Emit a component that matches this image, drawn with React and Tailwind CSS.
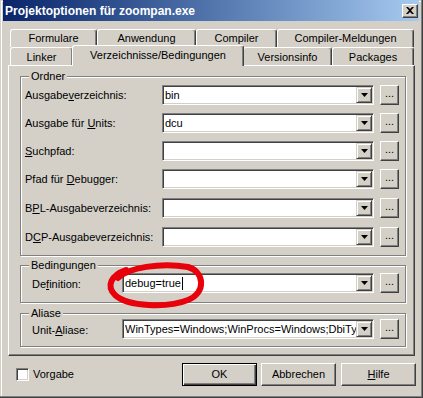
import React from 'react';

const raised =
  'border border-t-white border-l-white border-r-[#404040] border-b-[#404040] bg-[#d4d0c8] shadow-[inset_-1px_-1px_0_#808080]';

const Arrow = () => (
  <div className="flex h-[16px] w-[16px] shrink-0 items-center justify-center border border-t-[#d4d0c8] border-l-[#d4d0c8] border-r-[#404040] border-b-[#404040] bg-[#d4d0c8] shadow-[inset_1px_1px_0_#fff,inset_-1px_-1px_0_#808080]">
    <svg width="7" height="4" viewBox="0 0 7 4">
      <path d="M0 0h7L3.5 4z" fill="black" />
    </svg>
  </div>
);

const Combo = ({ value, wide, caret }) => (
  <div
    className={`flex h-[20px] shrink-0 border border-t-[#808080] border-l-[#808080] border-r-white border-b-white bg-white p-px shadow-[inset_1px_1px_0_#404040,inset_-1px_-1px_0_#d4d0c8] ${
      wide ? 'w-[252px]' : 'w-[212px]'
    }`}
  >
    <div className="flex min-w-0 flex-1 items-center whitespace-nowrap pl-[1px] leading-[16px]">
      {value}
      {caret && <span className="ml-px inline-block h-[13px] w-px bg-black" />}
    </div>
    <Arrow />
  </div>
);

const Dots = () => (
  <div className={`ml-[6px] flex h-[20px] w-[19px] shrink-0 items-center justify-center pb-[4px] ${raised}`}>
    ...
  </div>
);

const Row = ({ label, value, className = '' }) => (
  <div className={`flex h-[20px] items-center ${className}`}>
    <div className="w-[137px] shrink-0">{label}</div>
    <Combo value={value} />
    <Dots />
  </div>
);

const Tab = ({ w, children }) => (
  <div
    className={`flex h-[18px] shrink-0 items-center justify-center rounded-t-[3px] border-t border-l border-r border-t-white border-l-white border-r-[#404040] shadow-[inset_-1px_0_0_#808080] ${w}`}
  >
    {children}
  </div>
);

const Group = ({ title, className = '', children }) => (
  <fieldset
    className={`w-[386px] border border-[#808080] shadow-[1px_1px_0_#fff,inset_1px_1px_0_#fff] ${className}`}
  >
    <legend className="ml-[8px] bg-[#d4d0c8] px-[2px] leading-[12px]">{title}</legend>
    {children}
  </fieldset>
);

export default function App() {
  return (
    <div className="relative flex h-[398px] w-[423px] flex-col bg-[#d4d0c8] pl-[3px] pr-[4px] font-['Liberation_Sans',Arial,sans-serif] text-[11px] leading-[13px] text-black shadow-[inset_-1px_-1px_0_#404040,inset_-2px_-2px_0_#808080,inset_1px_1px_0_#d4d0c8,inset_2px_2px_0_#fff]">
      {/* title bar */}
      <div className="flex h-[21px] shrink-0 items-center bg-linear-to-r from-[#0a246a] to-[#a6caf0] pl-[2px] pr-[1px]">
        <span className="flex-1 pt-px text-[12px] font-bold text-white">Projektoptionen für zoompan.exe</span>
        <div className={`flex h-[14px] w-[16px] items-center justify-center ${raised}`}>
          <svg width="8" height="7" viewBox="0 0 8 7">
            <path d="M0 0h2l2 2 2-2h2L5 3.5 8 7H6L4 5 2 7H0l3-3.5z" fill="black" />
          </svg>
        </div>
      </div>

      {/* tabs */}
      <div className="ml-[5px] mt-[8px] w-[407px]">
        <div className="flex h-[18px] pl-[2px]">
          <Tab w="w-[87px]">Formulare</Tab>
          <Tab w="w-[99px]">Anwendung</Tab>
          <Tab w="w-[81px]">Compiler</Tab>
          <Tab w="w-[137px]">Compiler-Meldungen</Tab>
        </div>
        <div className="flex h-[18px] items-end pl-[2px]">
          <Tab w="w-[63px]">
            <span className="pt-[2px]">Linker</span>
          </Tab>
          <div className="relative z-10 -mx-px -mb-px flex h-[21px] w-[172px] shrink-0 justify-center rounded-t-[3px] border-t border-l border-r border-t-white border-l-white border-r-[#404040] bg-[#d4d0c8] pt-[3px] shadow-[inset_-1px_0_0_#808080]">
            Verzeichnisse/Bedingungen
          </div>
          <Tab w="w-[89px]">
            <span className="pt-[2px]">Versionsinfo</span>
          </Tab>
          <Tab w="w-[82px]">
            <span className="pt-[2px]">Packages</span>
          </Tab>
        </div>

        {/* panel */}
        <div className="h-[291px] border border-t-white border-l-white border-r-[#404040] border-b-[#404040] pl-[11px] pt-[4px] shadow-[inset_-1px_-1px_0_#808080]">
          <Group title="Ordner">
            <div className="px-[4px] pb-[8px] pt-[3px]">
              <Row label={<>Ausgabe<u>v</u>erzeichnis:</>} value="bin" />
              <Row className="mt-[8px]" label={<>Ausgabe für <u>U</u>nits:</>} value="dcu" />
              <Row className="mt-[8px]" label={<><u>S</u>uchpfad:</>} />
              <Row className="mt-[8px]" label={<>Pfad für <u>D</u>ebugger:</>} />
              <Row className="mt-[9px]" label={<>B<u>P</u>L-Ausgabeverzeichnis:</>} />
              <Row className="mt-[9px]" label={<>D<u>C</u>P-Ausgabeverzeichnis:</>} />
            </div>
          </Group>

          <Group title="Bedingungen" className="mt-[3px]">
            <div className="mb-[9px] mt-[2px] flex h-[20px] items-center pl-[11px]">
              <div className="w-[90px] shrink-0 pt-[3px]">
                De<u>f</u>inition:
              </div>
              <Combo wide value="debug=true" caret />
              <Dots />
            </div>
          </Group>

          <Group title="Aliase" className="mt-[4px]">
            <div className="mb-[7px] flex h-[20px] items-center pl-[11px]">
              <div className="w-[90px] shrink-0 pt-[3px]">
                Unit-<u>A</u>liase:
              </div>
              <Combo wide value="WinTypes=Windows;WinProcs=Windows;DbiTy" />
              <Dots />
            </div>
          </Group>
        </div>
      </div>

      {/* bottom row */}
      <div className="mt-[7px] flex h-[23px] items-center">
        <div className="ml-[13px] h-[13px] w-[13px] border border-t-[#808080] border-l-[#808080] border-r-white border-b-white bg-white shadow-[inset_1px_1px_0_#404040,inset_-1px_-1px_0_#d4d0c8]" />
        <span className="ml-[4px]">Vorgabe</span>
        <div className="ml-auto flex h-[23px] w-[75px] items-center justify-center border border-black bg-[#d4d0c8] shadow-[inset_1px_1px_0_#fff,inset_-1px_-1px_0_#404040,inset_-2px_-2px_0_#808080]">
          OK
        </div>
        <div className={`ml-[4px] flex h-[23px] w-[75px] items-center justify-center ${raised}`}>Abbrechen</div>
        <div className={`ml-[5px] mr-[3px] flex h-[23px] w-[75px] items-center justify-center ${raised}`}>
          <span>
            <u>H</u>ilfe
          </span>
        </div>
      </div>

      {/* red marker ellipse */}
      <svg className="pointer-events-none absolute left-0 top-0" width="423" height="398" viewBox="0 0 423 398">
        <path
          d="M118 278C128 268 160 262 188 267C205 272 206 293 188 300C168 308 128 307 115 295C106 286 111 275 126 270"
          fill="none"
          stroke="#e8000a"
          strokeWidth="6"
          strokeLinecap="round"
        />
      </svg>
    </div>
  );
}
